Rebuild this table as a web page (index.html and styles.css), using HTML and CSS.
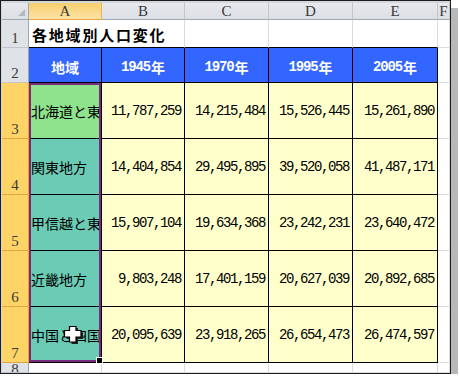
FILE: index.html
```html
<!DOCTYPE html>
<html lang="ja">
<head>
<meta charset="utf-8">
<title>各地域別人口変化</title>
<link rel="stylesheet" href="styles.css">
</head>
<body>
<div class="frame">
  <div class="grid">
    <!-- column headers -->
    <div class="c ch corner"><span class="tri"></span></div>
    <div class="c ch sel">A</div>
    <div class="c ch">B</div>
    <div class="c ch">C</div>
    <div class="c ch">D</div>
    <div class="c ch">E</div>
    <div class="c ch">F</div>

    <!-- row 1 -->
    <div class="c rh">1</div>
    <div class="c title">各地域別人口変化</div>
    <div class="c top"></div>
    <div class="c top"></div>
    <div class="c top"></div>
    <div class="c"></div>

    <!-- row 2 -->
    <div class="c rh">2</div>
    <div class="c t hd">地域</div>
    <div class="c t hd"><span class="num">1945</span>年</div>
    <div class="c t hd"><span class="num">1970</span>年</div>
    <div class="c t hd"><span class="num">1995</span>年</div>
    <div class="c t hd"><span class="num">2005</span>年</div>
    <div class="c"></div>

    <!-- row 3 -->
    <div class="c rh sel">3</div>
    <div class="c t nm green">北海道と東北</div>
    <div class="c t y">11,787,259</div>
    <div class="c t y">14,215,484</div>
    <div class="c t y">15,526,445</div>
    <div class="c t y">15,261,890</div>
    <div class="c"></div>

    <!-- row 4 -->
    <div class="c rh sel">4</div>
    <div class="c t nm teal">関東地方</div>
    <div class="c t y">14,404,854</div>
    <div class="c t y">29,495,895</div>
    <div class="c t y">39,520,058</div>
    <div class="c t y">41,487,171</div>
    <div class="c"></div>

    <!-- row 5 -->
    <div class="c rh sel">5</div>
    <div class="c t nm teal">甲信越と東海</div>
    <div class="c t y">15,907,104</div>
    <div class="c t y">19,634,368</div>
    <div class="c t y">23,242,231</div>
    <div class="c t y">23,640,472</div>
    <div class="c"></div>

    <!-- row 6 -->
    <div class="c rh sel">6</div>
    <div class="c t nm teal">近畿地方</div>
    <div class="c t y">9,803,248</div>
    <div class="c t y">17,401,159</div>
    <div class="c t y">20,627,039</div>
    <div class="c t y">20,892,685</div>
    <div class="c"></div>

    <!-- row 7 -->
    <div class="c rh sel">7</div>
    <div class="c t nm teal">中国と四国</div>
    <div class="c t y">20,095,639</div>
    <div class="c t y">23,918,265</div>
    <div class="c t y">26,654,473</div>
    <div class="c t y">26,474,597</div>
    <div class="c"></div>

    <!-- row 8 -->
    <div class="c rh last">8</div>
    <div class="c"></div>
    <div class="c"></div>
    <div class="c"></div>
    <div class="c"></div>
    <div class="c"></div>
    <div class="c"></div>

    <!-- selection overlay (positioned over grid area A3:A7) -->
    <div class="selection"><span class="handle"></span></div>

    <!-- mouse cursor -->
    <svg class="cursor" width="21" height="21" viewBox="0 0 21 21">
      <polygon points="8.5,3 15,3 15,7.5 20,7.5 20,14 15,14 15,19 8.5,19 8.5,14 3.5,14 3.5,7.5 8.5,7.5" fill="#222"/>
      <polygon points="6.5,1.5 13,1.5 13,5.5 18,5.5 18,12 13,12 13,17 6.5,17 6.5,12 1.5,12 1.5,5.5 6.5,5.5" fill="#fff" stroke="#000" stroke-width="1.2"/>
    </svg>
  </div>
</div>
</body>
</html>
```

FILE: styles.css
```css
html, body {
  margin: 0;
  padding: 0;
  background: #ffffff;
}

.frame {
  box-sizing: border-box;
  width: 451px;
  height: 374px;
  border: 1px solid #1c1c1c;
  padding: 2px 0 0 1px;
  background: #d3d6db;
  box-shadow: 7px 8px 0 #b8b8b8;
  overflow: hidden;
}

.grid {
  position: relative;
  display: grid;
  grid-template-columns: 27px 73px 83px 84px 84px 85px 12px;
  grid-template-rows: 17px 28px 35px repeat(5, 56px) 10px;
  background: #ffffff;
  font-family: "Noto Sans CJK JP", "Liberation Sans", sans-serif;
  color: #000;
}

.c {
  box-sizing: border-box;
  border-right: 1px solid #dadcdd;
  border-bottom: 1px solid #dadcdd;
  overflow: hidden;
  white-space: nowrap;
  display: flex;
  align-items: center;
  min-width: 0;
}

/* column headers */
.ch {
  background: linear-gradient(#e6e8ec, #dcdfe4);
  border-right-color: #c2c6cc;
  border-bottom-color: #9ea6b0;
  justify-content: center;
  font-family: "Liberation Serif", "DejaVu Serif", serif;
  font-size: 15px;
  color: #3a3a3a;
  line-height: 16px;
}

.ch.sel {
  background: linear-gradient(#f8cf6c, #fbe2a6);
  border-bottom: 1px solid #f0a53c;
  border-right-color: #e8b458;
}

.corner {
  position: relative;
  border-right-color: #9ea6b0;
}

.tri {
  position: absolute;
  right: 3px;
  bottom: 3px;
  width: 0;
  height: 0;
  border-left: 7px solid transparent;
  border-bottom: 7px solid #b4b9c0;
}

/* row headers */
.rh {
  background: #dfe2e6;
  border-right-color: #9ea6b0;
  border-bottom-color: #c2c6cc;
  justify-content: center;
  align-items: flex-end;
  font-family: "Liberation Serif", "DejaVu Serif", serif;
  font-size: 15px;
  line-height: 15px;
  color: #3a3a3a;
  padding-bottom: 1px;
}

.rh.sel {
  background: #ffd466;
  border-right-color: #eea233;
  border-bottom-color: #e2a640;
}

.rh.last {
  align-items: flex-start;
  padding-bottom: 0;
  line-height: 12px;
}

/* title row */
.title {
  grid-column: 2 / span 2;
  border-bottom-color: #000;
  align-items: flex-end;
  padding: 0 0 3px 3px;
  font-weight: bold;
  font-size: 15px;
  letter-spacing: 1.8px;
  line-height: 18px;
}

.top {
  border-bottom-color: #000;
}

/* table cells */
.t {
  border-right-color: #000;
  border-bottom-color: #000;
}

.hd {
  background: #3366ff;
  color: #ffffff;
  font-weight: bold;
  font-size: 14px;
  justify-content: center;
  padding-top: 3px;
}

.num {
  font-family: "Liberation Mono", monospace;
  letter-spacing: -1.2px;
  font-size: 14px;
  margin-right: 1px;
}

.nm {
  font-size: 14px;
  padding-left: 2px;
  justify-content: flex-start;
}

.green {
  background: #8ee38c;
}

.teal {
  background: #6ccbb4;
}

.y {
  background: #ffffcc;
  justify-content: flex-end;
  padding-right: 3px;
  font-family: "Liberation Mono", monospace;
  font-size: 14px;
  letter-spacing: -1.4px;
}

/* selection overlay */
.selection {
  position: absolute;
  grid-column: 2 / 3;
  grid-row: 4 / 9;
  top: 0;
  left: 0;
  right: 1px;
  bottom: 1px;
  box-sizing: border-box;
  border: 2px solid #7a2a7c;
  pointer-events: none;
}

.handle {
  position: absolute;
  right: -4px;
  bottom: -4px;
  width: 5px;
  height: 5px;
  background: #000;
  border: 1px solid #fff;
}

.cursor {
  position: absolute;
  left: 61px;
  top: 322px;
}
```
